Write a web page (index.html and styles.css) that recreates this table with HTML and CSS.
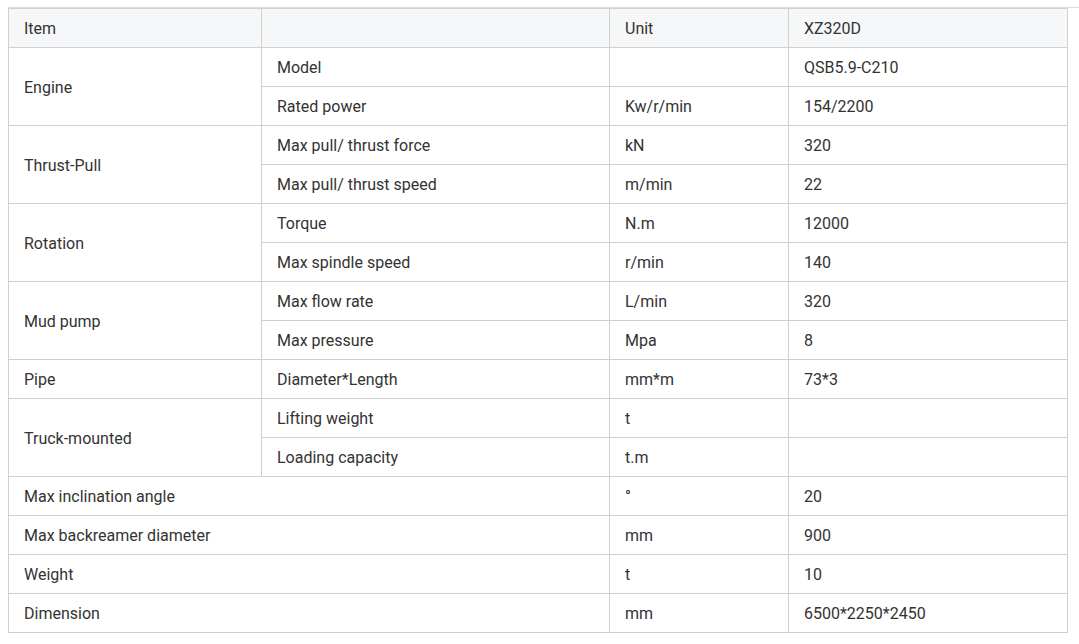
FILE: index.html
```html
<!DOCTYPE html>
<html>
<head>
<meta charset="utf-8">
<link rel="stylesheet" href="styles.css">
</head>
<body>
<div class="wrap">
<table class="spec">
  <colgroup>
    <col class="c1"><col class="c2"><col class="c3"><col class="c4">
  </colgroup>
  <thead>
    <tr><th>Item</th><th></th><th>Unit</th><th>XZ320D</th></tr>
  </thead>
  <tbody>
    <tr><td rowspan="2">Engine</td><td>Model</td><td></td><td>QSB5.9-C210</td></tr>
    <tr><td>Rated power</td><td>Kw/r/min</td><td>154/2200</td></tr>
    <tr><td rowspan="2">Thrust-Pull</td><td>Max pull/ thrust force</td><td>kN</td><td>320</td></tr>
    <tr><td>Max pull/ thrust speed</td><td>m/min</td><td>22</td></tr>
    <tr><td rowspan="2">Rotation</td><td>Torque</td><td>N.m</td><td>12000</td></tr>
    <tr><td>Max spindle speed</td><td>r/min</td><td>140</td></tr>
    <tr><td rowspan="2">Mud pump</td><td>Max flow rate</td><td>L/min</td><td>320</td></tr>
    <tr><td>Max pressure</td><td>Mpa</td><td>8</td></tr>
    <tr><td>Pipe</td><td>Diameter*Length</td><td>mm*m</td><td>73*3</td></tr>
    <tr><td rowspan="2">Truck-mounted</td><td>Lifting weight</td><td>t</td><td></td></tr>
    <tr><td>Loading capacity</td><td>t.m</td><td></td></tr>
    <tr><td colspan="2">Max inclination angle</td><td>°</td><td>20</td></tr>
    <tr><td colspan="2">Max backreamer diameter</td><td>mm</td><td>900</td></tr>
    <tr><td colspan="2">Weight</td><td>t</td><td>10</td></tr>
    <tr><td colspan="2">Dimension</td><td>mm</td><td>6500*2250*2450</td></tr>
  </tbody>
</table>
</div>
</body>
</html>
```
FILE: styles.css
```css
html, body {
  margin: 0;
  padding: 0;
  background: #ffffff;
}
body {
  padding: 7px 0 0 8px;
  font-family: Roboto, "Liberation Sans", Arial, sans-serif;
  color: #333333;
}
.wrap {
  border-top: 1px solid #dcdcdc;
}
.spec {
  border-collapse: collapse;
  table-layout: fixed;
  width: 1059px;
  font-size: 16px;
}
.c1 { width: 253px; }
.c2 { width: 348px; }
.c3 { width: 179px; }
.c4 { width: 279px; }
.spec th, .spec td {
  border: 1px solid #d0d0d0;
  height: 39px;
  padding: 2px 15px 0;
  text-align: left;
  font-weight: 400;
  box-sizing: border-box;
  vertical-align: middle;
  line-height: 20px;
}
.spec thead th {
  background: #f6f7f9;
}
```
